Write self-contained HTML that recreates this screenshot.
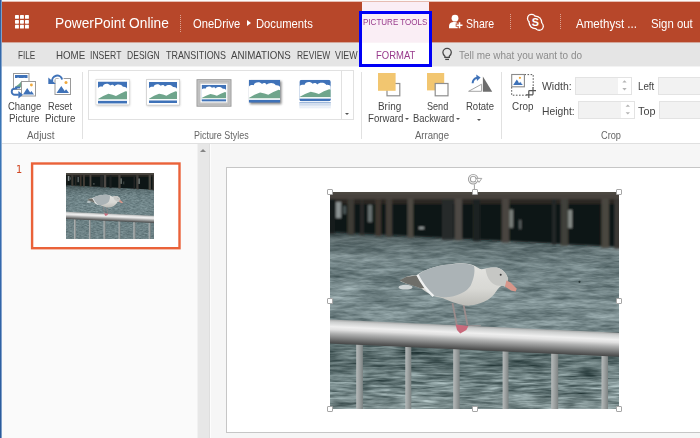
<!DOCTYPE html>
<html><head><meta charset="utf-8">
<style>
*{margin:0;padding:0;box-sizing:border-box}
html,body{width:700px;height:438px;overflow:hidden;background:#fff;font-family:"Liberation Sans",sans-serif}
#root{position:relative;width:700px;height:438px;overflow:hidden;background:#fff}
.abs{position:absolute}
.t{position:absolute;white-space:nowrap;line-height:1;transform-origin:0 0}
.sep{position:absolute;width:1px;background:#e1e1e1;top:72px;height:67px}
.hsep{position:absolute;width:1px;top:15px;height:17px;background:repeating-linear-gradient(#dca493 0 1px,#b7472a 1px 2px)}
.inp{position:absolute;height:18px;background:#f2f2f2;border:1px solid #e3e3e3}
.da{position:absolute;width:0;height:0;border-left:2.6px solid transparent;border-right:2.6px solid transparent;border-top:2.8px solid #555}
.hd{position:absolute;width:6px;height:6px;background:#fff;border:1px solid #a6a6a6;border-radius:1px}
</style></head><body><div id="root">
<div class="abs" style="left:0;top:0;width:700px;height:1px;background:#fbfbfb"></div><div class="abs" style="left:0;top:1px;width:700px;height:1px;background:#e6bdb3"></div>
<div class="abs" style="left:2px;top:2px;width:698px;height:40px;background:#b7472a"></div>
<div class="abs" style="left:2px;top:42px;width:698px;height:24px;background:#e5e5e5"></div>
<div class="abs" style="left:2px;top:66px;width:698px;height:78px;background:#fff"></div>
<div class="abs" style="left:2px;top:42px;width:698px;height:1px;background:#d3a69a"></div>
<div class="abs" style="left:2px;top:66px;width:698px;height:1px;background:#f3f3f3"></div>
<div class="abs" style="left:2px;top:143px;width:698px;height:1px;background:#e0e0e0"></div>

<!-- header -->
<svg class="abs" style="left:15px;top:15.3px" width="14" height="14" viewBox="0 0 14 14"><g fill="#fff"><rect x="0" y="0" width="3.9" height="3.8" rx=".6"/><rect x="5" y="0" width="3.9" height="3.8" rx=".6"/><rect x="10" y="0" width="3.9" height="3.8" rx=".6"/><rect x="0" y="4.9" width="3.9" height="3.8" rx=".6"/><rect x="5" y="4.9" width="3.9" height="3.8" rx=".6"/><rect x="10" y="4.9" width="3.9" height="3.8" rx=".6"/><rect x="0" y="9.8" width="3.9" height="3.8" rx=".6"/><rect x="5" y="9.8" width="3.9" height="3.8" rx=".6"/><rect x="10" y="9.8" width="3.9" height="3.8" rx=".6"/></g></svg>
<div class="hsep" style="left:180px"></div>
<div class="abs" style="left:247px;top:20px;width:0;height:0;border-left:4px solid #fff;border-top:3.2px solid transparent;border-bottom:3.2px solid transparent"></div>

<!-- picture tools -->
<div class="abs" style="left:362px;top:2px;width:67px;height:40px;background:#faeef5"></div>
<div class="abs" style="left:362px;top:42px;width:67px;height:25px;background:#fff"></div><div class="abs" style="left:362px;top:42px;width:67px;height:1px;background:#fbf3f7"></div>
<div class="hsep" style="left:510px;top:14px;height:16px"></div>
<div class="hsep" style="left:560px;top:14px;height:16px"></div>

<!-- ribbon -->
<div class="sep" style="left:82px"></div>
<div class="abs" style="left:88px;top:70px;width:266px;height:50px;border:1px solid #e1e1e1"></div>
<div class="abs" style="left:341px;top:70px;width:1px;height:50px;background:#e1e1e1"></div>
<div class="da" style="left:344.6px;top:112.6px"></div>
<div class="sep" style="left:361px"></div>
<div class="da" style="left:405.2px;top:118.4px"></div>
<div class="da" style="left:456.1px;top:118.4px"></div>
<div class="da" style="left:477.4px;top:118.8px"></div>
<div class="sep" style="left:501px"></div>
<div class="inp" style="left:575px;top:77px;width:57px"></div><div class="abs" style="left:618px;top:78px;width:13px;height:16px;background:#fff"></div>
<div class="inp" style="left:578px;top:101px;width:57px"></div><div class="abs" style="left:621px;top:102px;width:13px;height:16px;background:#fff"></div>
<div class="inp" style="left:658px;top:77px;width:50px"></div>
<div class="inp" style="left:659px;top:101px;width:50px"></div>
<svg class="abs" style="left:0;top:0" width="700" height="438" viewBox="0 0 700 438">
<defs><filter id="sh" x="-20%" y="-20%" width="140%" height="150%"><feGaussianBlur stdDeviation="0.9"/></filter><linearGradient id="refl" x1="0" y1="0" x2="0" y2="1"><stop offset="0" stop-color="#3f72b8" stop-opacity=".55"/><stop offset="1" stop-color="#3f72b8" stop-opacity="0"/></linearGradient></defs>
<g>
<rect x="13.5" y="73.5" width="15.5" height="16" fill="#fff" stroke="#9a9a9a"/>
<rect x="15" y="75" width="12.5" height="3" fill="#3f72b8"/>
<path d="M15 79 l3 -1.5 l3 1.2 l3 -1 l3.5 .8 v3 h-12.5z" fill="#fff"/>
<path d="M15 87 l4 -3 l3 -3.5 v7z" fill="#6fa58c"/>
<rect x="15" y="86.6" width="5" height="1.8" fill="#3f72b8"/>
<rect x="21.5" y="81.5" width="14" height="14.5" fill="#fff" stroke="#9a9a9a"/>
<path d="M23 94.5 l4.2 -6.5 l3 4.5 l1.2 -1.6 l2.6 3.6z" fill="#3f72b8"/>
<path d="M29.6 90.2 l1.2 -1.8 l2.8 4 " fill="none" stroke="#fff" stroke-width="0.9"/>
<circle cx="31.4" cy="85" r="1.4" fill="#f0a93c"/>
<path d="M17.2 88.6 h-2.4 a3.1 3.1 0 0 0 0 6.2 h4" fill="none" stroke="#3f72b8" stroke-width="1.9"/>
<path d="M18.4 91 l4.6 3.8 l-4.6 3.8z" fill="#3f72b8"/>
</g>
<g>
<rect x="55" y="78.5" width="15.5" height="16" fill="#fff" stroke="#9a9a9a"/>
<path d="M56.5 93 l4.8 -7 l3.4 5 l1.4 -1.8 l2.9 3.8z" fill="#3f72b8"/>
<path d="M64 88.4 l1.6 -2.2 l3.3 4.6" fill="none" stroke="#fff" stroke-width="0.9"/>
<circle cx="66" cy="82.4" r="1.5" fill="#f0a93c"/>
<path d="M52 81.5 a5.2 5.2 0 0 1 10.2 -1.5" fill="none" stroke="#fff" stroke-width="4"/>
<path d="M52.3 81.8 a5 5 0 0 1 9.8 -2.3" fill="none" stroke="#3f72b8" stroke-width="2"/>
<path d="M48.3 77.4 l7.6 6.6 h-7.6z" fill="#3f72b8"/>
</g>
<rect x="96.3" y="80.3" width="33.4" height="25.4" fill="#8a8a8a" opacity=".55" filter="url(#sh)"/>
<rect x="96" y="79.5" width="33.3" height="25.3" fill="#fff" stroke="#d9d9d9" stroke-width=".6"/>
<clipPath id="c98"><rect x="98" y="81.5" width="29" height="22" rx="0"/></clipPath>
<g clip-path="url(#c98)">
<rect x="98" y="81.5" width="29" height="22" fill="#3f72b8"/>
<path fill="#fff" d="M98 88.1 C99.45 86.34,101.48 86.34,102.64 86.78 C103.22 83.26,108.44 82.82,110.18 85.46 C111.63 84.14,113.95 84.58,114.53 86.34 C115.98 84.14,121.2 83.7,122.94 86.78 C124.68 86.34,126.42 87.22,127 88.54 L127 101.3 L98 101.3Z"/>
<path fill="#6fa58c" d="M98 99.1 L103.22 96.02 L108.44 93.82 L112.5 94.7 L115.98 96.02 L120.62 93.38 L125.55 91.18 L127 91.62 L127 99.53999999999999 L98 99.53999999999999Z"/>
<rect x="98" y="99.53999999999999" width="29" height="1.3199999999999998" fill="#fff"/>
<rect x="98" y="100.86" width="29" height="2.6399999999999997" fill="#3f72b8"/>
</g>
<rect x="147" y="80.3" width="33" height="25.6" fill="#8a8a8a" opacity=".55" filter="url(#sh)"/>
<rect x="146.6" y="79.5" width="33" height="25.6" fill="#fff" stroke="#cfcfcf" stroke-width=".8"/>
<clipPath id="c149"><rect x="149" y="82" width="28" height="21" rx="0"/></clipPath>
<g clip-path="url(#c149)">
<rect x="149" y="82" width="28" height="21" fill="#3f72b8"/>
<path fill="#fff" d="M149 88.3 C150.4 86.62,152.36 86.62,153.48 87.04 C154.04 83.68,159.08 83.26,160.76 85.78 C162.16 84.52,164.4 84.94,164.96 86.62 C166.36 84.52,171.4 84.1,173.07999999999998 87.04 C174.76 86.62,176.44 87.46,177 88.72 L177 100.9 L149 100.9Z"/>
<path fill="#6fa58c" d="M149 98.8 L154.04 95.86 L159.08 93.76 L163.0 94.6 L166.36 95.86 L170.84 93.34 L175.6 91.24 L177 91.66 L177 99.22 L149 99.22Z"/>
<rect x="149" y="99.22" width="28" height="1.26" fill="#fff"/>
<rect x="149" y="100.48" width="28" height="2.52" fill="#3f72b8"/>
</g>
<rect x="197" y="79.7" width="34" height="26.5" fill="#c9c9c9" stroke="#9b9b9b" stroke-width="1"/>
<rect x="199" y="81.7" width="30" height="22.5" fill="none" stroke="#b5b5b5" stroke-width="1"/>
<rect x="200.6" y="83.8" width="26.6" height="18.6" fill="#fff"/>
<clipPath id="c201"><rect x="201.6" y="84.8" width="24.6" height="16.6" rx="0"/></clipPath>
<g clip-path="url(#c201)">
<rect x="201.6" y="84.8" width="24.6" height="16.6" fill="#3f72b8"/>
<path fill="#fff" d="M201.6 89.78 C202.82999999999998 88.452,204.552 88.452,205.536 88.78399999999999 C206.028 86.128,210.456 85.79599999999999,211.932 87.788 C213.162 86.792,215.13 87.124,215.62199999999999 88.452 C216.852 86.792,221.28 86.46,222.756 88.78399999999999 C224.232 88.452,225.708 89.116,226.2 90.112 L226.2 99.74 L201.6 99.74Z"/>
<path fill="#6fa58c" d="M201.6 98.08 L206.028 95.756 L210.456 94.096 L213.9 94.75999999999999 L216.852 95.756 L220.788 93.764 L224.97 92.104 L226.2 92.43599999999999 L226.2 98.41199999999999 L201.6 98.41199999999999Z"/>
<rect x="201.6" y="98.41199999999999" width="24.6" height="0.996" fill="#fff"/>
<rect x="201.6" y="99.408" width="24.6" height="1.992" fill="#3f72b8"/>
</g>
<rect x="250" y="81.2" width="31.5" height="23" fill="#555" opacity=".7" filter="url(#sh)"/>
<clipPath id="c248"><rect x="248.8" y="79.8" width="31.4" height="22.8" rx="0"/></clipPath>
<g clip-path="url(#c248)">
<rect x="248.8" y="79.8" width="31.4" height="22.8" fill="#3f72b8"/>
<path fill="#fff" d="M248.8 86.64 C250.37 84.816,252.568 84.816,253.824 85.27199999999999 C254.452 81.624,260.104 81.16799999999999,261.988 83.904 C263.558 82.536,266.07 82.992,266.698 84.816 C268.26800000000003 82.536,273.92 82.08,275.80400000000003 85.27199999999999 C277.688 84.816,279.572 85.728,280.2 87.096 L280.2 100.32 L248.8 100.32Z"/>
<path fill="#6fa58c" d="M248.8 98.03999999999999 L254.452 94.848 L260.104 92.568 L264.5 93.47999999999999 L268.26800000000003 94.848 L273.29200000000003 92.112 L278.63 89.832 L280.2 90.288 L280.2 98.496 L248.8 98.496Z"/>
<rect x="248.8" y="98.496" width="31.4" height="1.3679999999999999" fill="#fff"/>
<rect x="248.8" y="99.864" width="31.4" height="2.7359999999999998" fill="#3f72b8"/>
</g>
<clipPath id="c299"><rect x="299.4" y="79.8" width="31.4" height="21.4" rx="2.5"/></clipPath>
<g clip-path="url(#c299)">
<rect x="299.4" y="79.8" width="31.4" height="21.4" fill="#3f72b8"/>
<path fill="#fff" d="M299.4 86.22 C300.96999999999997 84.508,303.16799999999995 84.508,304.424 84.93599999999999 C305.05199999999996 81.512,310.70399999999995 81.084,312.58799999999997 83.652 C314.15799999999996 82.368,316.66999999999996 82.79599999999999,317.298 84.508 C318.868 82.368,324.52 81.94,326.404 84.93599999999999 C328.28799999999995 84.508,330.17199999999997 85.364,330.79999999999995 86.648 L330.79999999999995 99.06 L299.4 99.06Z"/>
<path fill="#6fa58c" d="M299.4 96.92 L305.05199999999996 93.92399999999999 L310.70399999999995 91.78399999999999 L315.09999999999997 92.64 L318.868 93.92399999999999 L323.892 91.356 L329.22999999999996 89.216 L330.79999999999995 89.64399999999999 L330.79999999999995 97.348 L299.4 97.348Z"/>
<rect x="299.4" y="97.348" width="31.4" height="1.2839999999999998" fill="#fff"/>
<rect x="299.4" y="98.63199999999999" width="31.4" height="2.5679999999999996" fill="#3f72b8"/>
</g>
<rect x="299.4" y="102" width="31.4" height="7" fill="url(#refl)"/>
<rect x="299.4" y="103.4" width="31.4" height="1" fill="#fff" opacity=".8"/>
<rect x="299.4" y="105.6" width="31.4" height="1" fill="#fff" opacity=".8"/>
<rect x="387" y="83.5" width="12.8" height="12.3" fill="#fff" stroke="#8e8e8e" stroke-width="1.2"/>
<rect x="378" y="73" width="17.6" height="17.8" fill="#f2c670"/>
<rect x="427" y="73" width="17.2" height="17.4" fill="#f2c670"/>
<rect x="435.2" y="83.5" width="12.8" height="12.3" fill="#fff" stroke="#8e8e8e" stroke-width="1.2"/>
<path d="M468.6 91.3 L481.6 84.2 V91.3Z" fill="#fff" stroke="#a5a5a5" stroke-width="1"/>
<path d="M482.9 76.4 L492.2 91.8 H482.9Z" fill="#6d6d6d"/>
<path d="M472.6 83.2 a6 6 0 0 1 4.6 -5.4" fill="none" stroke="#3f72b8" stroke-width="2"/>
<path d="M476.2 74.6 l4.4 3 l-3.6 3.4z" fill="#3f72b8"/>
<path d="M524.4 74.6 H533.2 V88" fill="none" stroke="#555" stroke-width="1" stroke-dasharray="1.6 1.5"/>
<path d="M511.7 87 V95.2 H526.6" fill="none" stroke="#555" stroke-width="1" stroke-dasharray="1.6 1.5"/>
<rect x="511.7" y="74.5" width="12.7" height="12.3" fill="#fff" stroke="#8a8a8a" stroke-width="1.1"/>
<path d="M513.2 85 l3.6 -5.4 l2.4 3.4 l1.2 -1.5 l2.6 3.5z" fill="#3f72b8"/>
<path d="M518.8 82.6 l1.2 -1.6 l2.6 3.6" fill="none" stroke="#fff" stroke-width=".7"/>
<circle cx="519.9" cy="77.8" r="1.1" fill="#f0a93c"/>
<path d="M528.8 90.6 V98 M533 87 V94.8 M528.8 90.6 H536 M526 94.8 H533" stroke="#555" stroke-width="1.2" fill="none"/>
<path d="M622.3 82.60000000000001 l2.2 -2.4 l2.2 2.4z" fill="#b4b4b4"/>
<path d="M622.3 88.0 l2.2 2.4 l2.2 -2.4z" fill="#b4b4b4"/>
<path d="M625.5999999999999 106.8 l2.2 -2.4 l2.2 2.4z" fill="#b4b4b4"/>
<path d="M625.5999999999999 112.19999999999999 l2.2 2.4 l2.2 -2.4z" fill="#b4b4b4"/>
<g fill="#fff"><circle cx="455" cy="18.2" r="3.4"/><path d="M449 28.2 v-1.8 c0 -3.4 2.4 -4.4 5 -4.4 c1.6 0 2.8 .4 3.8 1.2 v5z"/></g>
<path d="M459.5 21.4 v7.6 M455.7 25.2 h7.6" stroke="#b7472a" stroke-width="3.2" fill="none"/>
<path d="M459.5 22.2 v6 M456.5 25.2 h6" stroke="#fff" stroke-width="1.6" fill="none"/>
<g fill="#fff"><circle cx="535.4" cy="22.3" r="6.9"/><circle cx="531.6" cy="18.4" r="4.7"/><circle cx="539.2" cy="26.2" r="4.7"/></g>
<g fill="#b7472a"><circle cx="535.4" cy="22.3" r="5.6"/><circle cx="531.6" cy="18.4" r="3.4"/><circle cx="539.2" cy="26.2" r="3.4"/></g>
<text x="535.4" y="26.3" font-family="Liberation Sans, sans-serif" font-weight="bold" font-size="10.8" fill="#fff" text-anchor="middle">S</text>
<g fill="none" stroke="#484848" stroke-width="1.3"><path d="M444.9 56.2 c-1.3 -1.2 -2 -2.2 -2 -3.6 a4.2 4.2 0 0 1 8.4 0 c0 1.4 -.7 2.4 -2 3.6 v1.2 h-4.4z"/><path d="M445.2 59.4 h3.8"/></g>
<circle cx="473.2" cy="179" r="4.2" fill="#fff" stroke="#9a9a9a" stroke-width="1.5"/><circle cx="473.2" cy="179" r="4.2" fill="none" stroke="#e8e8e8" stroke-width=".5"/>
<path d="M476.2 177.2 h5 l-2.5 3.6z" fill="#fff" stroke="#9a9a9a" stroke-width=".8"/>
<path d="M474.4 184 v6" stroke="#a0a0a0" stroke-width="1"/>
</svg>

<!-- workspace -->
<div class="abs" style="left:2px;top:144px;width:196px;height:294px;background:#fafafa"></div>
<div class="abs" style="left:197px;top:144px;width:13px;height:294px;background:#e7e7e7;border-left:1px solid #f1f1f1;border-right:1px solid #dedede"></div>
<div class="abs" style="left:210px;top:144px;width:490px;height:294px;background:#f6f6f6;border-left:1px solid #fdfdfd"></div>
<div class="abs" style="left:200.3px;top:149.4px;width:0;height:0;border-left:3px solid transparent;border-right:3px solid transparent;border-bottom:3.4px solid #858585"></div>
<div class="abs" style="left:226px;top:167px;width:480px;height:266px;background:#fff;border:1px solid #c6c6c6"></div>
<svg class="abs" style="left:28px;top:160px" width="156" height="92" viewBox="28 160 156 92"><rect x="32.1" y="163.5" width="147.4" height="84.7" fill="#fff" stroke="#ea6239" stroke-width="2.4"/></svg>
<svg class="abs" style="left:330px;top:192px" width="289" height="217" viewBox="330 192 289 217"><defs>
<filter id="wn" x="0" y="0" width="100%" height="100%" color-interpolation-filters="sRGB">
<feTurbulence type="fractalNoise" baseFrequency="0.07 0.42" numOctaves="3" seed="7"/><feColorMatrix type="matrix" values="1 0 0 0 0  0 1 0 0 0  0 0 1 0 0  0 0 0 0 1" result="n1"/>
<feTurbulence type="fractalNoise" baseFrequency="0.022 0.11" numOctaves="2" seed="3"/><feColorMatrix type="matrix" values="1 0 0 0 0  0 1 0 0 0  0 0 1 0 0  0 0 0 0 1" result="n2"/>
<feComposite in="n1" in2="n2" operator="arithmetic" k1="0" k2="0.6" k3="0.7" k4="-0.15" result="n"/>
<feColorMatrix in="n" type="matrix" values="0.5 0 0 0 0.215  0.5 0 0 0 0.285  0.5 0 0 0 0.295  0 0 0 0 1"/>
</filter>
<filter id="wn3" x="0" y="0" width="100%" height="100%" color-interpolation-filters="sRGB">
<feTurbulence type="fractalNoise" baseFrequency="0.1 0.5" numOctaves="2" seed="5" result="n"/>
<feColorMatrix in="n" type="matrix" values="0.5 0 0 0 0.2  0.5 0 0 0 0.28  0.5 0 0 0 0.295  0 0 0 0 1"/>
</filter>
<filter id="wn2" x="0" y="0" width="100%" height="100%" color-interpolation-filters="sRGB">
<feTurbulence type="fractalNoise" baseFrequency="0.045 0.4" numOctaves="3" seed="11"/><feColorMatrix type="matrix" values="1 0 0 0 0  0 1 0 0 0  0 0 1 0 0  0 0 0 0 1" result="n1"/>
<feTurbulence type="fractalNoise" baseFrequency="0.02 0.1" numOctaves="2" seed="9"/><feColorMatrix type="matrix" values="1 0 0 0 0  0 1 0 0 0  0 0 1 0 0  0 0 0 0 1" result="n2"/>
<feComposite in="n1" in2="n2" operator="arithmetic" k1="0" k2="0.7" k3="0.5" k4="-0.1" result="n"/>
<feColorMatrix in="n" type="matrix" values="0.85 0 0 0 0.012  0.85 0 0 0 0.086  0.85 0 0 0 0.09  0 0 0 0 1"/>
</filter>
<filter id="pb" x="-2%" y="-5%" width="104%" height="110%"><feGaussianBlur stdDeviation="0.8"/></filter>
<filter id="bb" x="-5%" y="-5%" width="110%" height="110%"><feGaussianBlur stdDeviation="0.55"/></filter>
<linearGradient id="refl2" gradientUnits="userSpaceOnUse" x1="0" y1="232" x2="0" y2="300"><stop offset="0" stop-color="#0c1616" stop-opacity=".5"/><stop offset=".2" stop-color="#0c1616" stop-opacity=".22"/><stop offset=".5" stop-color="#0c1616" stop-opacity=".04"/><stop offset="1" stop-color="#0c1616" stop-opacity="0"/></linearGradient>
<linearGradient id="lowtone" gradientUnits="userSpaceOnUse" x1="0" y1="340" x2="0" y2="409"><stop offset="0" stop-color="#1e3030" stop-opacity=".28"/><stop offset=".45" stop-color="#1e3030" stop-opacity=".2"/><stop offset=".62" stop-color="#1e3030" stop-opacity="0"/><stop offset=".7" stop-color="#dfe8e8" stop-opacity=".0"/><stop offset="1" stop-color="#dfe8e8" stop-opacity=".16"/></linearGradient>
<linearGradient id="bar" x1="0" y1="0" x2="1" y2="0"><stop offset="0" stop-color="#b6baba"/><stop offset=".45" stop-color="#9ea3a3"/><stop offset="1" stop-color="#7c8282"/></linearGradient>
<linearGradient id="rail" gradientUnits="userSpaceOnUse" x1="475" y1="326" x2="473.9" y2="350"><stop offset="0" stop-color="#a2a4a4"/><stop offset=".1" stop-color="#cbcdcd"/><stop offset=".3" stop-color="#efefef"/><stop offset=".42" stop-color="#e0e0e0"/><stop offset=".58" stop-color="#b0b1b1"/><stop offset=".75" stop-color="#858686"/><stop offset=".9" stop-color="#5e5f5f"/><stop offset="1" stop-color="#464747"/></linearGradient>
<linearGradient id="body" gradientUnits="userSpaceOnUse" x1="0" y1="262" x2="0" y2="307"><stop offset="0" stop-color="#e4e4e1"/><stop offset=".6" stop-color="#d8d8d4"/><stop offset="1" stop-color="#b9b9b4"/></linearGradient>
</defs>
<rect x="330" y="192" width="289" height="217" fill="#6b8282"/>
<rect x="330" y="192" width="289" height="140" filter="url(#wn)"/>
<rect x="330" y="332" width="289" height="77" filter="url(#wn2)"/>
<rect x="330" y="332" width="289" height="77" fill="url(#lowtone)"/>
<circle cx="579.5" cy="281.8" r="1.1" fill="#2a3636"/>
<path d="M330 228 L619 243 V300 H330Z" fill="url(#refl2)"/>
<g filter="url(#pb)">
<path d="M322 186 H627 V247.4 L322 231.6Z" fill="#111918"/>
<rect x="322" y="186" width="305" height="13.4" fill="#47433c"/><rect x="322" y="186" width="305" height="8" fill="#4e4a43"/>
<rect x="322" y="199.4" width="305" height="4.6" fill="#2b2824"/>
<rect x="322" y="199" width="13.0" height="34.4" fill="#171d1c"/>
<rect x="347.5" y="199" width="6.5" height="35.6" fill="#3d3a35"/>
<rect x="360.4" y="199" width="3.2" height="36.2" fill="#2d2c29"/>
<rect x="375.4" y="199" width="5.6" height="37.0" fill="#3c352f"/>
<rect x="386" y="199" width="6.0" height="37.6" fill="#433d37"/>
<rect x="407.5" y="199" width="5.8" height="38.7" fill="#4d4943"/>
<rect x="442" y="199" width="11.6" height="40.6" fill="#252a2a"/>
<rect x="454.6" y="199" width="7.4" height="41.2" fill="#4d4a45"/>
<rect x="472.8" y="199" width="7.2" height="42.1" fill="#1e2322"/>
<rect x="501.8" y="199" width="7.5" height="43.6" fill="#484540"/>
<rect x="552" y="199" width="4.0" height="46.1" fill="#242826"/>
<rect x="560.7" y="199" width="7.5" height="46.7" fill="#413f3a"/>
<rect x="601.4" y="199" width="7.6" height="48.8" fill="#48463f"/>
<rect x="614.3" y="199" width="12.7" height="49.6" fill="#3b3935"/>
<rect x="336" y="202" width="5.0" height="16.0" fill="#8a9292"/>
<rect x="368" y="205" width="4.0" height="17.0" fill="#687070"/>
<rect x="509.3" y="209.6" width="3.7" height="18.2" fill="#7a807c"/>
<rect x="519.5" y="220" width="1.2" height="9.0" fill="#8a9090"/>
<rect x="568.2" y="210" width="3.8" height="18.0" fill="#868c88"/>
<rect x="343" y="206" width="3.0" height="8.0" fill="#4a5252"/>
<rect x="419" y="227" width="5.0" height="2.0" fill="#9aa0a0"/>
</g>
<rect x="356.2" y="342.7" width="6.7" height="66.3" fill="url(#bar)"/>
<rect x="405.3" y="344.9" width="6.0" height="64.1" fill="url(#bar)"/>
<rect x="453.2" y="347.1" width="6.5" height="61.9" fill="url(#bar)"/>
<rect x="502.6" y="349.4" width="5.9" height="59.6" fill="url(#bar)"/>
<rect x="551.2" y="351.6" width="7.0" height="57.4" fill="url(#bar)"/>
<rect x="601.5" y="353.9" width="6.5" height="55.1" fill="url(#bar)"/>
<g filter="url(#bb)">
<path d="M452.5 303 L456.8 325 M463.2 303 L467.5 325" stroke="#9a8c8c" stroke-width="1.8" fill="none"/>
<path d="M468 325.4 H481" stroke="#b09a9a" stroke-width=".8" opacity=".7"/>
<ellipse cx="405.5" cy="287.2" rx="7" ry="2.4" fill="#e9ebeb" opacity=".8"/>
<path d="M400 281 L406.4 276.8 C410 275.5 414 275.5 417 275.3 C420 272.5 424 270.8 427.9 269.3 C435 266.6 442 265.2 449.3 264.6 C454 263.6 458 263.3 462.1 263.3 C467 263.4 471 264.4 475 266 C477 267.2 479 268.6 481.4 269.3 C483.5 269 485.5 268.5 487.9 268.2 C491 267.4 494 267.3 496.4 267.6 C499.5 268.2 502 269.5 503.9 271.4 C506 273.5 507.4 276 508.2 278.9 L505 286.4 C504 286.2 503 285.8 501.8 285.4 C500 286.5 498.5 288 497.5 289.6 C496.5 291 495.3 292.5 494.3 294 C492.5 296.2 490.5 298.2 487.9 299.7 C485 301.4 482 302.7 479.3 303.6 C476 304.8 472 305.5 468.6 305.7 C464 305.6 459.5 304.5 455.7 303 C451 301.6 447 300 442.9 298.2 C439.5 297.3 436.5 296.6 433.2 296 C429 294 425 291.5 421.4 288.6 C417 287 413 285.5 408.6 284.3 C405.5 283.5 402.5 282.3 400 281Z" fill="url(#body)"/>
<path d="M399.6 280.6 L406.4 276.8 L417 275.6 L425 287.8 L421 288.6 C416 286.6 410 284.8 406 283.6Z" fill="#6e6e69"/>
<path d="M485.6 268.6 C489 267.4 494 267.2 496.4 267.6 C499.5 268.2 502 269.5 503.9 271.4 C506 273.5 507.4 276 508.2 278.9 L505 286.4 L501.8 285.4 C498 286.6 494 285 491 282 C487.6 278.4 485.8 273 485.6 268.6Z" fill="#c6c7c4"/>
<path d="M418 275 C421 272.4 424.5 270.6 428 269.3 C435 266.6 442 265.2 449.3 264.6 C454 263.7 458 263.4 462 263.4 C467 263.5 471 264.5 474 266 C475.4 272 473.6 279 470.7 285.4 C469 288 467 290 464.3 291.8 C460 294.4 455 296.2 449.3 297.1 C445 297.5 440 297 436.4 296 L433 295.4 C427 289.5 421.5 282 418 275Z" fill="#abb3b6"/>
<path d="M417.4 274.8 C421 282 426.5 290 433.4 296.2" stroke="#f0f2f2" stroke-width="2.4" fill="none"/>
<circle cx="500.7" cy="274.8" r="1" fill="#3c3c3c"/>
<path d="M506.4 280.6 L510.6 282.4 L516.8 288.8 L515.6 291.6 L511 290.6 L505 286.4Z" fill="#d8968a"/>
</g>
<path d="M330 319.6 L619 332.8 V356.7 L330 343.5Z" fill="url(#rail)"/>
<path d="M455.6 324.4 L468.4 326 L466.4 330 L460.2 333.4 L457 330Z" fill="#c96a7c"/></svg>
<svg class="abs" style="left:66px;top:173px" width="88" height="66" viewBox="330 192 289 217" preserveAspectRatio="none">
<rect x="330" y="192" width="289" height="217" fill="#6b8282"/>
<rect x="330" y="192" width="289" height="140" fill="#6f8589"/>
<rect x="330" y="332" width="289" height="77" fill="#677c80"/>
<rect x="330" y="192" width="289" height="217" filter="url(#wn3)" opacity=".5"/>
<circle cx="579.5" cy="281.8" r="1.1" fill="#2a3636"/>
<path d="M330 228 L619 243 V300 H330Z" fill="url(#refl2)"/>
<g filter="url(#pb)">
<path d="M322 186 H627 V247.4 L322 231.6Z" fill="#111918"/>
<rect x="322" y="186" width="305" height="13.4" fill="#47433c"/><rect x="322" y="186" width="305" height="8" fill="#4e4a43"/>
<rect x="322" y="199.4" width="305" height="4.6" fill="#2b2824"/>
<rect x="322" y="199" width="13.0" height="34.4" fill="#171d1c"/>
<rect x="347.5" y="199" width="6.5" height="35.6" fill="#3d3a35"/>
<rect x="360.4" y="199" width="3.2" height="36.2" fill="#2d2c29"/>
<rect x="375.4" y="199" width="5.6" height="37.0" fill="#3c352f"/>
<rect x="386" y="199" width="6.0" height="37.6" fill="#433d37"/>
<rect x="407.5" y="199" width="5.8" height="38.7" fill="#4d4943"/>
<rect x="442" y="199" width="11.6" height="40.6" fill="#252a2a"/>
<rect x="454.6" y="199" width="7.4" height="41.2" fill="#4d4a45"/>
<rect x="472.8" y="199" width="7.2" height="42.1" fill="#1e2322"/>
<rect x="501.8" y="199" width="7.5" height="43.6" fill="#484540"/>
<rect x="552" y="199" width="4.0" height="46.1" fill="#242826"/>
<rect x="560.7" y="199" width="7.5" height="46.7" fill="#413f3a"/>
<rect x="601.4" y="199" width="7.6" height="48.8" fill="#48463f"/>
<rect x="614.3" y="199" width="12.7" height="49.6" fill="#3b3935"/>
<rect x="336" y="202" width="5.0" height="16.0" fill="#8a9292"/>
<rect x="368" y="205" width="4.0" height="17.0" fill="#687070"/>
<rect x="509.3" y="209.6" width="3.7" height="18.2" fill="#7a807c"/>
<rect x="519.5" y="220" width="1.2" height="9.0" fill="#8a9090"/>
<rect x="568.2" y="210" width="3.8" height="18.0" fill="#868c88"/>
<rect x="343" y="206" width="3.0" height="8.0" fill="#4a5252"/>
<rect x="419" y="227" width="5.0" height="2.0" fill="#9aa0a0"/>
</g>
<rect x="356.2" y="342.7" width="6.7" height="66.3" fill="url(#bar)"/>
<rect x="405.3" y="344.9" width="6.0" height="64.1" fill="url(#bar)"/>
<rect x="453.2" y="347.1" width="6.5" height="61.9" fill="url(#bar)"/>
<rect x="502.6" y="349.4" width="5.9" height="59.6" fill="url(#bar)"/>
<rect x="551.2" y="351.6" width="7.0" height="57.4" fill="url(#bar)"/>
<rect x="601.5" y="353.9" width="6.5" height="55.1" fill="url(#bar)"/>
<g filter="url(#bb)">
<path d="M452.5 303 L456.8 325 M463.2 303 L467.5 325" stroke="#9a8c8c" stroke-width="1.8" fill="none"/>
<path d="M468 325.4 H481" stroke="#b09a9a" stroke-width=".8" opacity=".7"/>
<ellipse cx="405.5" cy="287.2" rx="7" ry="2.4" fill="#e9ebeb" opacity=".8"/>
<path d="M400 281 L406.4 276.8 C410 275.5 414 275.5 417 275.3 C420 272.5 424 270.8 427.9 269.3 C435 266.6 442 265.2 449.3 264.6 C454 263.6 458 263.3 462.1 263.3 C467 263.4 471 264.4 475 266 C477 267.2 479 268.6 481.4 269.3 C483.5 269 485.5 268.5 487.9 268.2 C491 267.4 494 267.3 496.4 267.6 C499.5 268.2 502 269.5 503.9 271.4 C506 273.5 507.4 276 508.2 278.9 L505 286.4 C504 286.2 503 285.8 501.8 285.4 C500 286.5 498.5 288 497.5 289.6 C496.5 291 495.3 292.5 494.3 294 C492.5 296.2 490.5 298.2 487.9 299.7 C485 301.4 482 302.7 479.3 303.6 C476 304.8 472 305.5 468.6 305.7 C464 305.6 459.5 304.5 455.7 303 C451 301.6 447 300 442.9 298.2 C439.5 297.3 436.5 296.6 433.2 296 C429 294 425 291.5 421.4 288.6 C417 287 413 285.5 408.6 284.3 C405.5 283.5 402.5 282.3 400 281Z" fill="url(#body)"/>
<path d="M399.6 280.6 L406.4 276.8 L417 275.6 L425 287.8 L421 288.6 C416 286.6 410 284.8 406 283.6Z" fill="#6e6e69"/>
<path d="M485.6 268.6 C489 267.4 494 267.2 496.4 267.6 C499.5 268.2 502 269.5 503.9 271.4 C506 273.5 507.4 276 508.2 278.9 L505 286.4 L501.8 285.4 C498 286.6 494 285 491 282 C487.6 278.4 485.8 273 485.6 268.6Z" fill="#c6c7c4"/>
<path d="M418 275 C421 272.4 424.5 270.6 428 269.3 C435 266.6 442 265.2 449.3 264.6 C454 263.7 458 263.4 462 263.4 C467 263.5 471 264.5 474 266 C475.4 272 473.6 279 470.7 285.4 C469 288 467 290 464.3 291.8 C460 294.4 455 296.2 449.3 297.1 C445 297.5 440 297 436.4 296 L433 295.4 C427 289.5 421.5 282 418 275Z" fill="#abb3b6"/>
<path d="M417.4 274.8 C421 282 426.5 290 433.4 296.2" stroke="#f0f2f2" stroke-width="2.4" fill="none"/>
<circle cx="500.7" cy="274.8" r="1" fill="#3c3c3c"/>
<path d="M506.4 280.6 L510.6 282.4 L516.8 288.8 L515.6 291.6 L511 290.6 L505 286.4Z" fill="#d8968a"/>
</g>
<path d="M330 319.6 L619 332.8 V356.7 L330 343.5Z" fill="url(#rail)"/>
<path d="M455.6 324.4 L468.4 326 L466.4 330 L460.2 333.4 L457 330Z" fill="#c96a7c"/></svg>
<svg class="abs" style="left:462px;top:170px" width="24" height="24" viewBox="462 170 24 24"><circle cx="473.2" cy="179.2" r="3.8" fill="none" stroke="#9c9c9c" stroke-width="2.9"/><circle cx="473.2" cy="179.2" r="3.8" fill="none" stroke="#f2f2f2" stroke-width="1.1"/><rect x="475.8" y="178.8" width="3.6" height="2.2" fill="#fff"/><path d="M476.2 178.4 h5.6 l-2.8 4z" fill="#fff" stroke="#9c9c9c" stroke-width=".9"/><path d="M474.4 184.4 v5" stroke="#a0a0a0" stroke-width="1"/></svg>
<div class="hd" style="left:327px;top:189px"></div><div class="hd" style="left:471.5px;top:189px"></div><div class="hd" style="left:616px;top:189px"></div><div class="hd" style="left:327px;top:297.5px"></div><div class="hd" style="left:616px;top:297.5px"></div><div class="hd" style="left:327px;top:406px"></div><div class="hd" style="left:471.5px;top:406px"></div><div class="hd" style="left:616px;top:406px"></div>
<div class="t" id="ppo" style="left:54.6px;top:15px;font-size:15.2px;color:#fff;transform:scaleX(0.9046);">PowerPoint Online</div>
<div class="t" id="od" style="left:193.2px;top:18px;font-size:12.6px;color:#fff;transform:scaleX(0.8872);">OneDrive</div>
<div class="t" id="docs" style="left:255.6px;top:18px;font-size:12.6px;color:#fff;transform:scaleX(0.8916);">Documents</div>
<div class="t" id="ptools" style="left:363.4px;top:17px;font-size:9.6px;color:#983a8c;transform:scaleX(0.8369);">PICTURE TOOLS</div>
<div class="t" id="fmt" style="left:375.9px;top:51px;font-size:10.2px;color:#983a8c;transform:scaleX(0.9298);">FORMAT</div>
<div class="t" id="share" style="left:465.6px;top:18px;font-size:12.6px;color:#fff;transform:scaleX(0.8391);">Share</div>
<div class="t" id="ame" style="left:576.2px;top:18px;font-size:12.6px;color:#fff;transform:scaleX(0.9173);">Amethyst ...</div>
<div class="t" id="so" style="left:650.9px;top:18px;font-size:12.6px;color:#fff;transform:scaleX(0.9022);">Sign out</div>
<div class="t" id="t1" style="left:18.1px;top:51px;font-size:10.4px;color:#444;transform:scaleX(0.7880);">FILE</div>
<div class="t" id="t2" style="left:56.0px;top:51px;font-size:10.4px;color:#444;transform:scaleX(0.9363);">HOME</div>
<div class="t" id="t3" style="left:89.8px;top:51px;font-size:10.4px;color:#444;transform:scaleX(0.8280);">INSERT</div>
<div class="t" id="t4" style="left:127.2px;top:51px;font-size:10.4px;color:#444;transform:scaleX(0.8232);">DESIGN</div>
<div class="t" id="t5" style="left:166.0px;top:51px;font-size:10.4px;color:#444;transform:scaleX(0.8589);">TRANSITIONS</div>
<div class="t" id="t6" style="left:231.4px;top:51px;font-size:10.4px;color:#444;transform:scaleX(0.9360);">ANIMATIONS</div>
<div class="t" id="t7" style="left:296.8px;top:51px;font-size:10.4px;color:#444;transform:scaleX(0.8098);">REVIEW</div>
<div class="t" id="t8" style="left:335.0px;top:51px;font-size:10.4px;color:#444;transform:scaleX(0.8508);">VIEW</div>
<div class="t" id="tell" style="left:459.0px;top:50px;font-size:10.6px;color:#8c8c8c;transform:scaleX(0.9408);">Tell me what you want to do</div>
<div class="t" id="r1a" style="left:7.8px;top:102px;font-size:10.1px;color:#444;transform:scaleX(0.9389);">Change</div>
<div class="t" id="r1b" style="left:9.2px;top:114px;font-size:10.1px;color:#444;transform:scaleX(0.9675);">Picture</div>
<div class="t" id="r2a" style="left:48.0px;top:102px;font-size:10.1px;color:#444;transform:scaleX(0.9100);">Reset</div>
<div class="t" id="r2b" style="left:44.8px;top:114px;font-size:10.1px;color:#444;transform:scaleX(0.9675);">Picture</div>
<div class="t" id="g1" style="left:27.2px;top:131px;font-size:10px;color:#666;transform:scaleX(0.9929);">Adjust</div>
<div class="t" id="g2" style="left:194.2px;top:131px;font-size:10px;color:#666;transform:scaleX(0.8930);">Picture Styles</div>
<div class="t" id="r3a" style="left:377.6px;top:102px;font-size:10.1px;color:#444;transform:scaleX(0.9840);">Bring</div>
<div class="t" id="r3b" style="left:368.0px;top:114px;font-size:10.1px;color:#444;transform:scaleX(0.9559);">Forward</div>
<div class="t" id="r4a" style="left:426.6px;top:102px;font-size:10.1px;color:#444;transform:scaleX(0.8991);">Send</div>
<div class="t" id="r4b" style="left:413.2px;top:114px;font-size:10.1px;color:#444;transform:scaleX(0.9294);">Backward</div>
<div class="t" id="r5a" style="left:465.6px;top:102px;font-size:10.1px;color:#444;transform:scaleX(0.9412);">Rotate</div>
<div class="t" id="g3" style="left:415.0px;top:131px;font-size:10px;color:#666;transform:scaleX(0.9556);">Arrange</div>
<div class="t" id="r6" style="left:512.2px;top:102px;font-size:10.1px;color:#444;transform:scaleX(0.9776);">Crop</div>
<div class="t" id="w1" style="left:542.4px;top:82px;font-size:10.1px;color:#444;transform:scaleX(1.0346);">Width:</div>
<div class="t" id="w2" style="left:542.4px;top:107px;font-size:10.1px;color:#444;transform:scaleX(1.0192);">Height:</div>
<div class="t" id="w3" style="left:638.1px;top:82px;font-size:10.1px;color:#444;transform:scaleX(0.9677);">Left</div>
<div class="t" id="w4" style="left:638.1px;top:107px;font-size:10.1px;color:#444;transform:scaleX(1.0749);">Top</div>
<div class="t" id="g4" style="left:601.2px;top:131px;font-size:10px;color:#666;transform:scaleX(0.9222);">Crop</div>
<div class="t" id="n1" style="left:15.6px;top:165px;font-size:10.9px;color:#cf4520;transform:scaleX(0.8937);font-family:DejaVu Sans,sans-serif;">1</div>
<div class="abs" style="left:359px;top:11px;width:73px;height:56px;border:3px solid #0000f6"></div>
<div class="abs" style="left:0;top:0;width:1px;height:438px;background:linear-gradient(#2f5d9e,#3b78b8 30%,#3468ac 60%,#2a5a9a)"></div><div class="abs" style="left:1px;top:0;width:1px;height:438px;background:linear-gradient(#7d9cc6,#8fb0d6 30%,#86a4cf 60%,#7b9cc6)"></div>
</div></body></html>
